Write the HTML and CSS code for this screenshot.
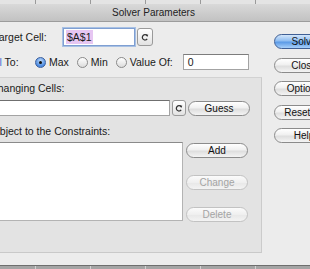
FILE: index.html
```html
<!DOCTYPE html>
<html lang="en">
<head>
    <meta charset="UTF-8">
    <meta name="viewport" content="width=device-width, initial-scale=1.0">
    <title>Solver Parameters</title>
    <link rel="stylesheet" href="styles.css">
</head>
<body>
    <div class="sheet-top"></div>
    <div class="titlebar">Solver Parameters</div>

    <div class="content">
        <div class="main">
            <div class="row target-row">
                <label class="lbl target-lbl">Set Target Cell:</label>
                <div class="cell-input focused"><span class="sel">$A$1</span></div>
                <button class="ref-btn">
                    <svg viewBox="0 0 12 12" width="10" height="10"><path d="M8.4 4.3 A3.2 3.2 0 1 0 8.6 8.3" fill="none" stroke="#333" stroke-width="1.5"/><path d="M6.9 2.6 L10 3.2 L8.6 6 Z" fill="#333"/></svg>
                </button>
            </div>

            <div class="row equal-row">
                <span class="lbl equal-lbl"><span class="hl">Equal</span> To:</span>
                <span class="opt"><span class="radio on"></span>Max</span>
                <span class="opt"><span class="radio"></span>Min</span>
                <span class="opt"><span class="radio"></span>Value Of:</span>
                <div class="value-input">0</div>
            </div>

            <div class="panel">
                <div class="lbl">By Changing Cells:</div>
                <div class="row changing-row">
                    <div class="changing-input"></div>
                    <button class="ref-btn small">
                        <svg viewBox="0 0 12 12" width="10" height="10"><path d="M8.4 4.3 A3.2 3.2 0 1 0 8.6 8.3" fill="none" stroke="#333" stroke-width="1.5"/><path d="M6.9 2.6 L10 3.2 L8.6 6 Z" fill="#333"/></svg>
                    </button>
                    <button class="btn side-btn">Guess</button>
                </div>

                <div class="lbl constraints-lbl">Subject to the Constraints:</div>
                <div class="constraints">
                    <div class="list"></div>
                    <div class="list-actions">
                        <button class="btn side-btn">Add</button>
                        <button class="btn side-btn" disabled>Change</button>
                        <button class="btn side-btn" disabled>Delete</button>
                    </div>
                </div>
            </div>
        </div>

        <div class="actions">
            <button class="btn act-btn default">Solve</button>
            <button class="btn act-btn">Close</button>
            <button class="btn act-btn">Options</button>
            <button class="btn act-btn">Reset All</button>
            <button class="btn act-btn">Help</button>
        </div>
    </div>

    <div class="sheet-bottom"></div>
</body>
</html>
```

FILE: styles.css
```css
body {
    margin: 0;
    width: 310px;
    height: 269px;
    overflow: hidden;
    display: flex;
    flex-direction: column;
    background-color: #ececec;
    font-family: 'Liberation Sans', Arial, sans-serif;
    font-size: 10.5px;
    color: #1a1a1a;
}

.sheet-top {
    height: 4px;
    flex-shrink: 0;
    background-color: #e4e4e4;
    background-image: repeating-linear-gradient(90deg, transparent 0, transparent 35px, #9a9a9a 35px, #9a9a9a 36px, transparent 36px, transparent 55px);
    background-position: 0 0;
}

.titlebar {
    height: 17px;
    flex-shrink: 0;
    line-height: 17px;
    text-align: center;
    padding-right: 3px;
    font-size: 10px;
    color: #222;
    background: linear-gradient(#d9d9d9, #c2c2c2);
    border-bottom: 1px solid #9c9c9c;
}

.content {
    flex: 1;
    display: flex;
    margin-left: -40px;
}

.main {
    width: 302px;
    flex-shrink: 0;
}

.row {
    display: flex;
    align-items: center;
}

.lbl {
    line-height: 14px;
    white-space: nowrap;
}

.target-row {
    margin-top: 6px;
    height: 18px;
    padding-left: 15px;
}

.target-lbl {
    width: 88px;
}

.cell-input {
    width: 68px;
    height: 16px;
    background-color: #fff;
    border: 1px solid #7f9fd2;
    box-shadow: 0 0 0 1px rgba(140, 175, 225, 0.7);
    display: flex;
    align-items: center;
    padding-left: 2px;
}

.sel {
    background-color: #e6c6f2;
    padding: 1px 1px;
    line-height: 12px;
}

.ref-btn {
    width: 16px;
    height: 18px;
    margin-left: 2px;
    padding: 0;
    border: 1px solid #9a9a9a;
    border-radius: 3px;
    background: linear-gradient(#ffffff, #e2e2e2);
    display: flex;
    align-items: center;
    justify-content: center;
}

.ref-btn.small {
    width: 14px;
    height: 16px;
}

.equal-row {
    margin-top: 8px;
    height: 16px;
    padding-left: 15px;
}

.equal-lbl {
    width: 60px;
}

.hl {
    color: #3a6fd6;
}

.opt {
    display: flex;
    align-items: center;
    gap: 3px;
    margin-right: 8px;
}

.radio {
    width: 9px;
    height: 9px;
    border: 1px solid #8a8a8a;
    border-radius: 50%;
    background: linear-gradient(#ffffff, #dcdcdc);
    display: flex;
    align-items: center;
    justify-content: center;
}

.radio.on {
    border-color: #3a5f9e;
    background: radial-gradient(circle at 50% 30%, #b9d6f8, #4b8ae0 70%);
}

.radio.on::after {
    content: "";
    width: 3px;
    height: 3px;
    border-radius: 50%;
    background-color: #111;
}

.value-input {
    width: 60px;
    height: 14px;
    margin-left: 2px;
    padding-left: 4px;
    line-height: 14px;
    background-color: #fff;
    border: 1px solid #a3a3a3;
    border-top-color: #7c7c7c;
}

.panel {
    margin-top: 7px;
    padding: 3px 0 30px 15px;
    background-color: #e3e3e3;
    border-top: 1px solid #d2d2d2;
    border-right: 1px solid #cbcbcb;
    border-bottom: 1px solid #c9c9c9;
}

.changing-row {
    margin-top: 5px;
    height: 16px;
}

.changing-input {
    width: 193px;
    height: 14px;
    background-color: #fff;
    border: 1px solid #a3a3a3;
    border-top-color: #6f6f6f;
}

.btn {
    font-family: 'Liberation Sans', Arial, sans-serif;
    font-size: 10px;
    color: #111;
    height: 15px;
    padding: 0;
    border: 1px solid #8b8b8b;
    border-radius: 8px;
    background: linear-gradient(#ffffff, #f0f0f0 45%, #dedede 55%, #f4f4f4);
    line-height: 13px;
}

.btn:disabled {
    color: #a4a4a4;
    border-color: #c2c2c2;
    background: linear-gradient(#fbfbfb, #efefef 50%, #e8e8e8 55%, #f3f3f3);
}

.side-btn {
    width: 62px;
    margin-left: 2px;
}

.constraints-lbl {
    margin-top: 8px;
    padding-left: 12px;
}

.constraints {
    display: flex;
    margin-top: 4px;
}

.list {
    width: 206px;
    height: 77px;
    background-color: #fff;
    border: 1px solid #b3b3b3;
    border-top-color: #8a8a8a;
}

.list-actions {
    display: flex;
    flex-direction: column;
    gap: 17px;
    padding-top: 1px;
    margin-left: 3px;
}

.list-actions .side-btn {
    margin-left: 0;
}

.actions {
    display: flex;
    flex-direction: column;
    gap: 8.5px;
    margin-top: 12px;
    margin-left: 12px;
}

.act-btn {
    width: 60px;
    flex-shrink: 0;
}

.act-btn.default {
    border-color: #3f5f95;
    background: linear-gradient(#d3e6fb, #8fbdf1 45%, #5b9ae6 55%, #a8d0fa);
}

.sheet-bottom {
    height: 3px;
    flex-shrink: 0;
    border-top: 1px solid #6e6e6e;
    background-color: #a4a4a4;
    background-image: repeating-linear-gradient(90deg, transparent 0, transparent 35px, #d2d2d2 35px, #d2d2d2 36px, transparent 36px, transparent 55px);
}
```
